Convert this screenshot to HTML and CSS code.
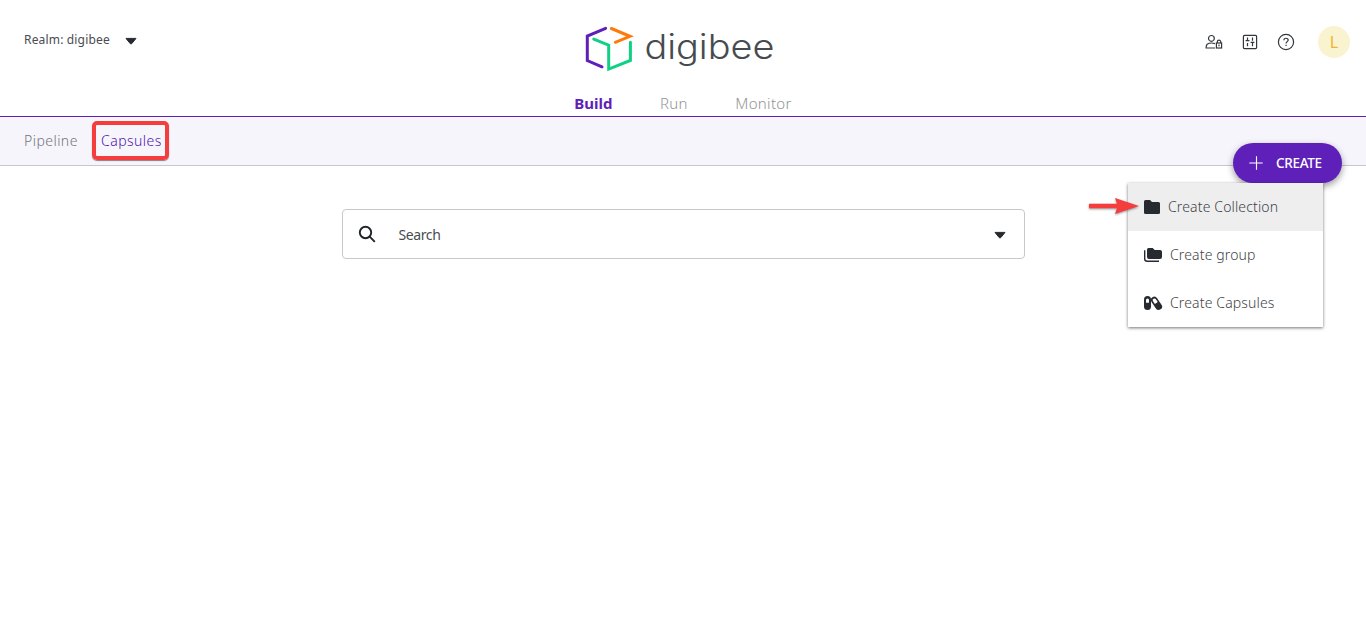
FILE: index.html
```html
<!DOCTYPE html>
<html lang="en">
<head>
<meta charset="utf-8">
<title>Digibee</title>
<link rel="stylesheet" href="styles.css">
</head>
<body>
<header class="header">
  <div class="top">
    <button class="realm"><span class="realm-name">Realm: digibee</span>
      <svg class="caret" width="12" height="7" viewBox="0 0 12 7"><path d="M1 0.4h10L6.8 5.6Q6 6.4 5.2 5.6Z" fill="#272b2f" stroke="#272b2f" stroke-linejoin="round"/></svg>
    </button>
    <svg class="logo" width="200" height="50" viewBox="0 0 200 50" role="img" aria-label="digibee">
      <g fill="none" stroke-width="3" stroke-linecap="round" stroke-linejoin="miter">
        <path d="M21.6 4.4 3.3 12.1V36.6L18 42.8" stroke="#5f20ba"/>
        <path d="M27.4 4.5 46 12.3 31.3 18.3" stroke="#ff7a0c"/>
        <path d="M9.8 15.1 24.7 21.2V45.1L46.4 36.5V18.2" stroke="#0fd084"/>
      </g>
      <text class="wordmark" x="60.4" y="34.5" textLength="130" lengthAdjust="spacingAndGlyphs">digibee</text>
    </svg>
    <div class="tools">
      <svg width="18" height="16" viewBox="0 0 18 16" fill="none" stroke="#33373b" stroke-width="1.2">
        <circle cx="6.4" cy="4.4" r="2.9"/><path d="M10 9.6C8 9 4.2 8.8 2.2 10.3 1.1 11.2 1.1 12 1.1 14H10"/>
        <path d="M12.3 9V7.8a1.7 1.7 0 0 1 3.4 0V9"/><rect x="11.4" y="9" width="5.2" height="5"/><path d="M14 10.6v1.6"/>
      </svg>
      <svg width="16" height="16" viewBox="0 0 16 16" fill="none" stroke="#33373b" stroke-width="1.2">
        <rect x="1.4" y="1.4" width="13.2" height="13.2" rx="1"/><path d="M5.5 3.5v3.7M3.6 6.7h3.8M5.5 9V12.2M10.5 3.5v3.2M10.5 8.8V12.2M8.6 8.3h3.8"/>
      </svg>
      <svg width="18" height="18" viewBox="0 0 18 18" fill="none" stroke="#33373b" stroke-width="1.2">
        <circle cx="9" cy="9" r="7.6"/><path d="M6.9 7.2C6.9 4.6 11.2 4.6 11.2 7.1 11.2 8.6 9.1 8.7 9.1 10.4M9.1 11.7v1.3"/>
      </svg>
      <span class="avatar">L</span>
    </div>
  </div>
  <nav class="tabs">
    <a class="tab tab-active">Build</a><a class="tab">Run</a><a class="tab">Monitor</a>
  </nav>
</header>
<nav class="subnav">
  <a class="sub">Pipeline</a>
  <a class="sub sub-active">Capsules</a>
</nav>
<div class="actions">
  <button class="create">
    <svg width="14" height="14" viewBox="0 0 14 14" stroke="#fff" stroke-width="1.1"><path d="M7.5 .3v13.4M.3 7h13.4"/></svg>
    <span>CREATE</span>
  </button>
  <div class="menu">
    <a class="item item-hover">
      <svg width="16" height="14" viewBox="0 0 16 14" fill="#272b2f"><path d="M1.5 0H6l2 2h6.5Q16 2 16 3.5v9Q16 14 14.5 14h-13Q0 14 0 12.5v-11Q0 0 1.5 0Z"/></svg>
      <span>Create Collection</span></a>
    <a class="item">
      <svg width="18" height="14" viewBox="0 0 18 14" fill="#272b2f"><path d="M4.5 0H8.7l2 2h5.3Q18 2 18 4v5Q18 11 16 11H5Q3 11 3 9V1.5Q3 0 4.5 0Z"/><path d="M.7 2.2v8.6Q.7 13.3 3.2 13.3H15" fill="none" stroke="#272b2f" stroke-width="1.4"/></svg>
      <span>Create group</span></a>
    <a class="item">
      <svg width="18" height="14" viewBox="0 0 18 14"><rect width="7" height="14" rx="3.5" fill="#272b2f"/><path d="M2 6.8V4a1.5 1.5 0 0 1 3 0v2.8Z" fill="#fff"/><g transform="rotate(-34 12.5 7.3)"><rect x="9.1" y="0" width="6.8" height="14.6" rx="3.4" fill="#272b2f"/><path d="M10.8 7V3.6a1.7 1.7 0 0 1 3.4 0V7Z" fill="#fff"/></g></svg>
      <span>Create Capsules</span></a>
  </div>
  <svg class="arrow" width="52" height="20" viewBox="0 0 52 20"><path d="M1 7.7H29L27 2 51 10 27 18 29 12.3H1Z" fill="#f53d3d"/></svg>
</div>
<main class="main">
  <div class="search">
    <svg width="18" height="18" viewBox="0 0 18 18" fill="none" stroke="#202428" stroke-width="1.9"><circle cx="7.5" cy="7.5" r="5.7"/><path d="M11.7 11.7 16.8 16.8"/></svg>
    <span class="search-label">Search</span>
    <svg class="caret" width="12" height="7" viewBox="0 0 12 7"><path d="M1 0.4h10L6.8 5.6Q6 6.4 5.2 5.6Z" fill="#272b2f" stroke="#272b2f" stroke-linejoin="round"/></svg>
  </div>
</main>
</body>
</html>
```
FILE: styles.css
```css
* { box-sizing: border-box; }
body { margin: 0; background: #fff; font-family: "Noto Sans", sans-serif; color: #484c50; overflow: hidden; }
button { font: inherit; border: 0; background: none; padding: 0; color: inherit; }
svg { display: block; flex: none; overflow: visible; }
.header { height: 117px; border-bottom: 1px solid #5f20ba; }
.top { display: grid; grid-template-columns: 1fr 200px 1fr; height: 90px; padding: 0 16px 0 24px; align-items: start; }
.realm { display: flex; align-items: center; gap: 15px; height: 20px; margin-top: 29px; }
.realm-name { width: 86px; text-align: left; white-space: nowrap; font-size: 12px; letter-spacing: .17px; }
.caret { position: relative; top: 2px; }
.search .caret { top: 1px; }
.logo { margin: 24px 0 0 -3px; }
.wordmark { font-family: Inter, sans-serif; font-size: 34px; font-weight: 300; fill: #464b50; }
.tools { display: flex; justify-content: flex-end; align-items: center; gap: 19px; height: 32px; margin-top: 26px; }
.avatar { width: 32px; height: 32px; margin-left: 4px; border-radius: 50%; background: #f9f3cf; color: #efb32d; font-size: 16px; line-height: 33px; text-align: center; }
.tabs { display: flex; justify-content: center; gap: 47.5px; height: 26px; align-items: center; font-size: 15px; font-weight: 300; color: #929496; letter-spacing: .3px; }
.tab-active { color: #5f20ba; font-weight: 700; letter-spacing: 0; }
.subnav { height: 49px; border-bottom: 1px solid #c8c6cf; background: #f6f5fc; display: flex; align-items: center; gap: 15px; padding: 0 0 2px 24px; font-size: 14px; font-weight: 300; letter-spacing: .45px; color: #74767a; }
.sub { width: 53px; white-space: nowrap; }
.sub-active { height: 39px; width: 77px; line-height: 32px; border: 4px solid #f53d3d; border-radius: 5px; color: #5012b0; padding-left: 5px; box-shadow: 0 1px 1px #8a7c84; }
.actions { position: absolute; top: 143px; right: 24px; width: 109px; }
.create { position: relative; display: flex; align-items: center; gap: 13px; width: 109px; height: 40px; padding-left: 16px; border-radius: 20px; background: #5f20ba; color: #fff; font-size: 13.5px; font-weight: 500; letter-spacing: -.3px; box-shadow: 0 3px 7px rgba(0,0,0,.4); }
.menu { position: absolute; top: 40px; right: 19px; width: 195px; background: #fff; box-shadow: 0 1px 3px rgba(0,0,0,.55); font-size: 14px; font-weight: 300; letter-spacing: .14px; color: #404448; }
.item { display: flex; align-items: center; gap: 8px; height: 48px; padding-left: 16px; white-space: nowrap; }
.item span { padding-bottom: 1px; }
.item-hover { background: #eee; }
.arrow { position: absolute; top: 53px; left: -145px; filter: drop-shadow(0 1px 1px rgba(0,0,0,.4)); }
.main { display: flex; justify-content: center; padding-top: 43px; }
.search { display: flex; align-items: center; width: 683px; height: 50px; border: 1px solid #c5c9c9; border-radius: 4px; padding: 0 18px 0 15px; font-size: 14px; letter-spacing: -.4px; }
.search-label { flex: 1; margin-left: 23px; }
```
